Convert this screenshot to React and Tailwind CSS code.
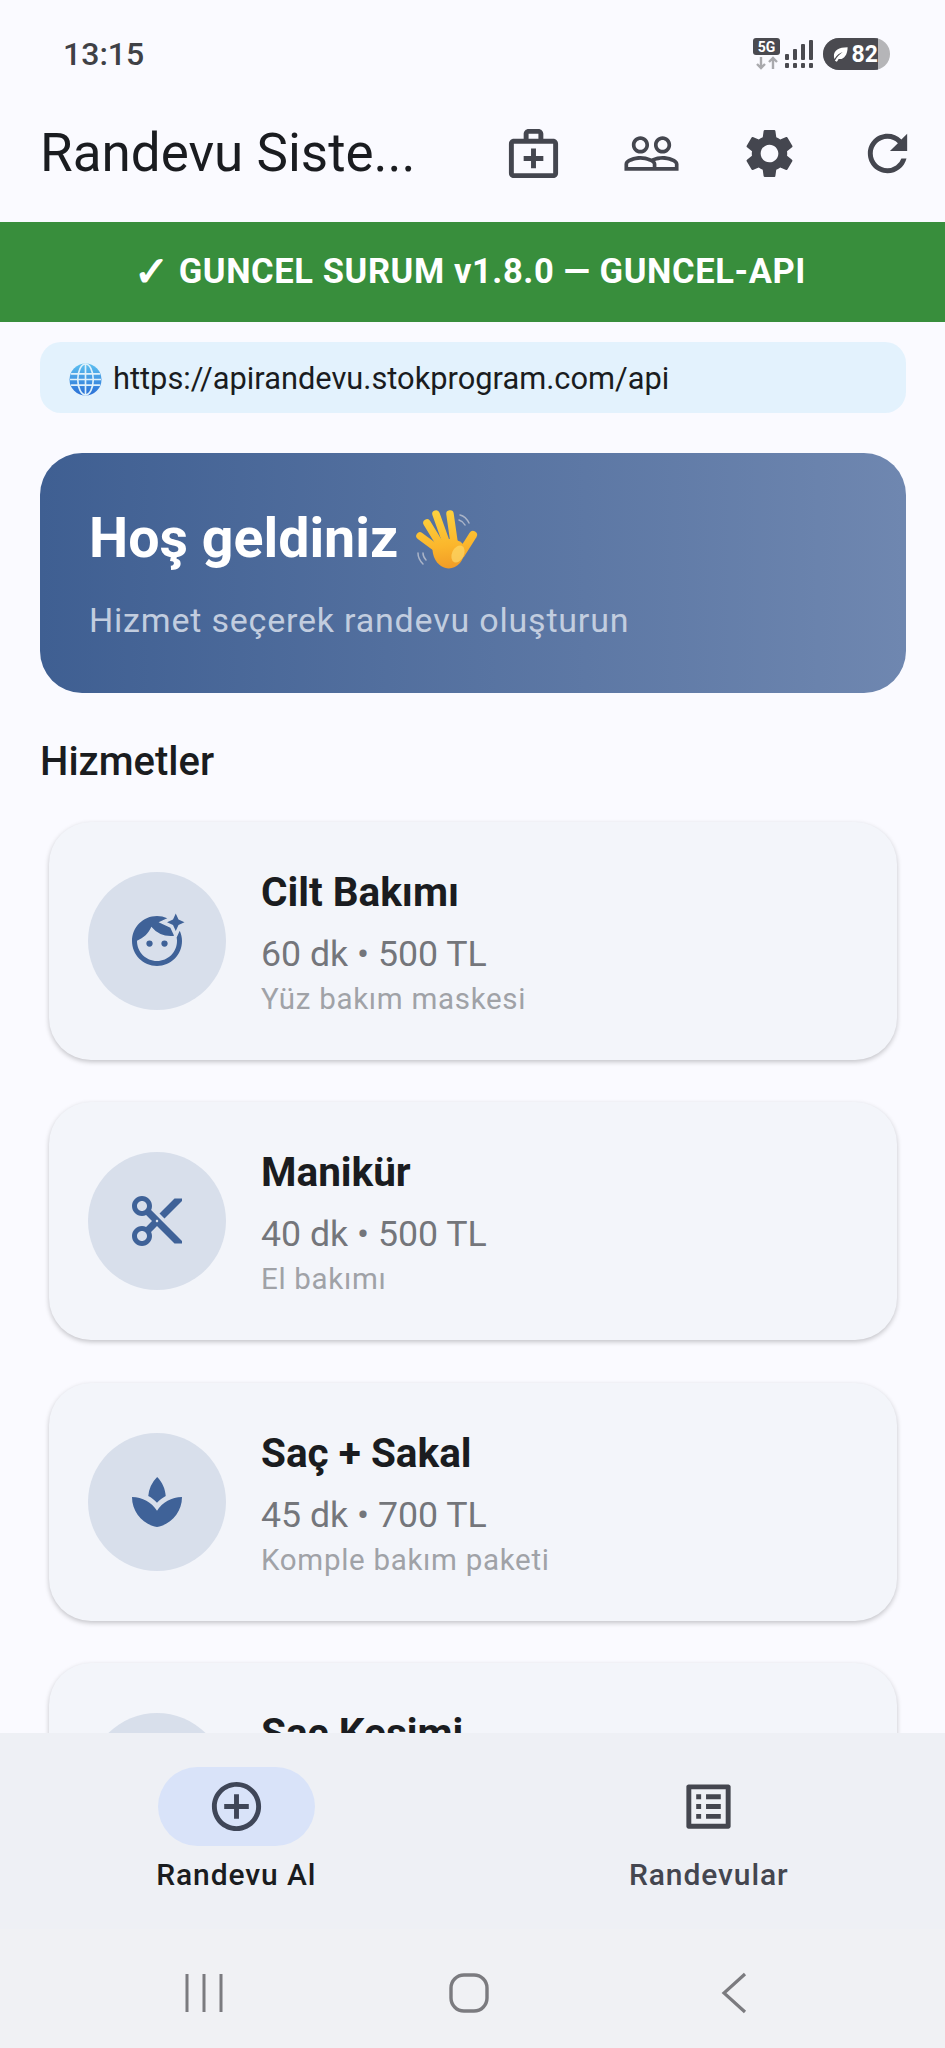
import { MdOutlineMedicalServices, MdPeopleOutline, MdSettings, MdRefresh, MdFaceRetouchingNatural, MdContentCut, MdSpa, MdAddCircleOutline, MdOutlineListAlt } from 'react-icons/md';

const services = [
  { name: 'Cilt Bakımı', meta: '60 dk • 500 TL', desc: 'Yüz bakım maskesi', Icon: MdFaceRetouchingNatural },
  { name: 'Manikür', meta: '40 dk • 500 TL', desc: 'El bakımı', Icon: MdContentCut },
  { name: 'Saç + Sakal', meta: '45 dk • 700 TL', desc: 'Komple bakım paketi', Icon: MdSpa },
  { name: 'Saç Kesimi', meta: '\u00a0', desc: '\u00a0', Icon: MdContentCut },
];

function StatusIcons() {
  return (
    <div className="flex items-center">
      <div className="flex flex-col items-center w-[27px]">
        <div className="w-[27px] h-[17px] bg-[#4a4a50] rounded-[3px] flex items-center justify-center text-white text-[14px] font-bold leading-none">5G</div>
        <svg width="24" height="14" viewBox="0 0 24 14" className="mt-[1px]">
          <path d="M6 1v11M2 8l4 4 4-4" fill="none" stroke="#a9a9ad" strokeWidth="2.4" />
          <path d="M18 13V2M14 6l4-4 4 4" fill="none" stroke="#a9a9ad" strokeWidth="2.4" />
        </svg>
      </div>
      <svg width="29" height="30" viewBox="0 0 29 30" className="ml-[5px]">
        <g fill="#4a4a50">
          <rect x="0" y="24" width="4" height="5" rx="1" />
          <rect x="8" y="24" width="4" height="5" rx="1" />
          <rect x="16" y="24" width="4" height="5" rx="1" />
          <rect x="24" y="24" width="4" height="5" rx="1" />
          <rect x="0" y="15" width="4" height="6" rx="1" />
          <rect x="8" y="10" width="4" height="11" rx="1" />
          <rect x="16" y="5" width="4" height="16" rx="1" />
          <rect x="24" y="1" width="4" height="20" rx="1" />
        </g>
      </svg>
      <div className="ml-[9px] relative w-[67px] h-[32px] rounded-full overflow-hidden bg-[#b5b5b8]">
        <div className="w-[55px] h-full bg-[#4a4a50] flex items-center pl-[7px] gap-[3px]">
          <svg width="19" height="17" viewBox="0 0 19 17">
            <path d="M18 1C9 1 4 4 4 10c0 1 .2 2 .6 3C7 9 10 7 13 6c-3 2-6 5-8 9l2 1c.6-1 1.2-2 1.8-3C14 14 18 9 18 1z" fill="#fff" />
          </svg>
          <span className="text-white text-[23px] font-bold leading-none">82</span>
        </div>
      </div>
    </div>
  );
}

function GlobeEmoji() {
  return (
    <svg width="33" height="33" viewBox="0 0 32 32" className="shrink-0">
      <defs>
        <linearGradient id="globe" x1="0" y1="0" x2="0" y2="1">
          <stop offset="0" stopColor="#5cc0f0" />
          <stop offset="1" stopColor="#2a6fd6" />
        </linearGradient>
      </defs>
      <circle cx="16" cy="16" r="15.5" fill="url(#globe)" />
      <g fill="none" stroke="#dff1fb" strokeWidth="1.6">
        <ellipse cx="16" cy="16" rx="7.5" ry="15" />
        <path d="M16 1v30M2 10.5h28M1 16h30M2 21.5h28" />
      </g>
    </svg>
  );
}

function WaveEmoji() {
  return (
    <svg width="66" height="66" viewBox="10 8 66 66" className="shrink-0">
      <defs>
        <linearGradient id="hand" gradientUnits="userSpaceOnUse" x1="40" y1="12" x2="46" y2="72">
          <stop offset="0" stopColor="#fdd23e" />
          <stop offset="0.6" stopColor="#fbb62c" />
          <stop offset="1" stopColor="#f19a26" />
        </linearGradient>
      </defs>
      <path d="M57 17c4 1 7 4 9 8M56 22c3 1 5 3 6 5" fill="none" stroke="#aab4c8" strokeWidth="1.5" strokeLinecap="round" />
      <path d="M15 55c0 4 2 8 5 11M20 55c0 3 1 5 3 7" fill="none" stroke="#aab4c8" strokeWidth="1.5" strokeLinecap="round" />
      <g stroke="url(#hand)" strokeLinecap="round" fill="none">
        <path d="M17 38 36 52" strokeWidth="7.5" />
        <path d="M24 25 38 48" strokeWidth="7.5" />
        <path d="M33 16 43 44" strokeWidth="7.5" />
        <path d="M47 16 51 44" strokeWidth="7.5" />
        <path d="M70 37 58 56" strokeWidth="8" />
      </g>
      <path d="M30 46c8-6 22-7 29-1 4 5 3 14-2 20-5 6-13 7-19 3-6-4-10-13-8-22z" fill="url(#hand)" />
      <ellipse cx="55" cy="56" rx="6" ry="9" transform="rotate(25 55 56)" fill="#fdd86a" opacity="0.7" />
    </svg>
  );
}

function ServiceCard({ service }) {
  const { name, meta, desc, Icon } = service;
  return (
    <div className="shrink-0 h-[238px] ml-[9px] mr-[9px] rounded-[42px] bg-[#f3f5fa] shadow-[0_2px_5px_rgba(0,0,0,0.22)] flex items-center pl-[39px]">
      <div className="w-[138px] h-[138px] rounded-full bg-[#d8dfeb] flex items-center justify-center shrink-0">
        <Icon size={60} color="#3f6298" />
      </div>
      <div className="ml-[35px] pt-[4px] flex flex-col">
        <div className="text-[40.5px] leading-[46px] font-bold text-[#1a1c20]">{name}</div>
        <div className="mt-[19px] text-[35.7px] leading-[40px] text-[#74767b]">{meta}</div>
        <div className="mt-[7px] text-[29.5px] leading-[36px] tracking-[0.7px] text-[#a0a2a7]">{desc}</div>
      </div>
    </div>
  );
}

export default function App() {
  return (
    <div className="h-screen w-full flex flex-col overflow-hidden bg-[#fafaff] font-['Roboto',sans-serif]">
      <div className="h-[100px] shrink-0 flex items-center justify-between pl-[63px] pr-[55px] pt-[8px]">
        <span className="text-[32px] font-medium text-[#3f4146]">13:15</span>
        <StatusIcons />
      </div>

      <div className="h-[122px] shrink-0 flex items-center pl-[40px] pr-[28px] pb-[16px]">
        <h1 className="flex-1 text-[53px] leading-none text-[#1a1c20]">Randevu Siste...</h1>
        <div className="flex items-center">
          <MdOutlineMedicalServices size={59} color="#44464f" />
          <MdPeopleOutline size={59} color="#44464f" className="ml-[59px]" />
          <MdSettings size={59} color="#44464f" className="ml-[59px]" />
          <MdRefresh size={59} color="#44464f" className="ml-[59px]" />
        </div>
      </div>

      <div className="h-[100px] shrink-0 bg-[#388e3c] flex items-center justify-center pr-[5px] text-white text-[34.5px] font-bold tracking-[0.6px]">
        <span className="text-[42px] leading-none mr-[9px]">✓</span>
        <span>GUNCEL SURUM v1.8.0 — GUNCEL-API</span>
      </div>

      <div className="flex-1 min-h-0 overflow-hidden pl-[40px] pr-[39px] pt-[20px] flex flex-col">
        <div className="h-[71px] shrink-0 rounded-[21px] bg-[#e3f2fd] flex items-center pl-[29px] pt-[3px] gap-[11px] text-[30.8px] text-[#1a1c20]">
          <GlobeEmoji />
          <span>https://apirandevu.stokprogram.com/api</span>
        </div>

        <div className="mt-[40px] h-[240px] shrink-0 rounded-[42px] bg-gradient-to-r from-[#3f5f92] to-[#6f87b0] pl-[49px] flex flex-col">
          <div className="mt-[54px] flex items-center gap-[15px] h-[64px]">
            <span className="text-[55.5px] leading-[64px] font-bold text-white">Hoş geldiniz</span>
            <WaveEmoji />
          </div>
          <div className="mt-[29px] text-[34px] leading-[40px] tracking-[0.8px] text-[#c2cddf]">Hizmet seçerek randevu oluşturun</div>
        </div>

        <div className="mt-[47px] text-[40px] leading-[44px] font-medium text-[#1a1c20]">Hizmetler</div>

        <div className="mt-[38px] flex flex-col gap-[42.3px]">
          {services.map((s) => (
            <ServiceCard key={s.name} service={s} />
          ))}
        </div>
      </div>

      <div className="h-[196px] shrink-0 bg-[#eef0f5] grid grid-cols-2">
        <div className="flex flex-col items-center pt-[34px]">
          <div className="w-[157px] h-[79px] rounded-full bg-[#d9e3f9] flex items-center justify-center">
            <MdAddCircleOutline size={59} color="#3f4658" />
          </div>
          <div className="mt-[11px] text-[30px] leading-[36px] font-medium tracking-[0.9px] text-[#1a1c20]">Randevu Al</div>
        </div>
        <div className="flex flex-col items-center pt-[34px]">
          <div className="w-[157px] h-[79px] flex items-center justify-center">
            <MdOutlineListAlt size={59} color="#44464f" />
          </div>
          <div className="mt-[11px] text-[30px] leading-[36px] font-medium tracking-[0.9px] text-[#44464f]">Randevular</div>
        </div>
      </div>

      <div className="h-[119px] shrink-0 bg-[#f0f1f4] grid grid-cols-3 items-center justify-items-center pl-[72px] pr-[79px] pt-[9px]">
        <svg width="38" height="40" viewBox="0 0 38 40">
          <path d="M2 1v38M19 1v38M36 1v38" stroke="#7b7b7f" strokeWidth="3" fill="none" />
        </svg>
        <svg width="40" height="40" viewBox="0 0 40 40">
          <rect x="2" y="2" width="36" height="36" rx="13" stroke="#7b7b7f" strokeWidth="3.4" fill="none" />
        </svg>
        <svg width="26" height="42" viewBox="0 0 26 42">
          <path d="M24 2 3 21l21 19" stroke="#7b7b7f" strokeWidth="3.2" fill="none" />
        </svg>
      </div>
    </div>
  );
}
